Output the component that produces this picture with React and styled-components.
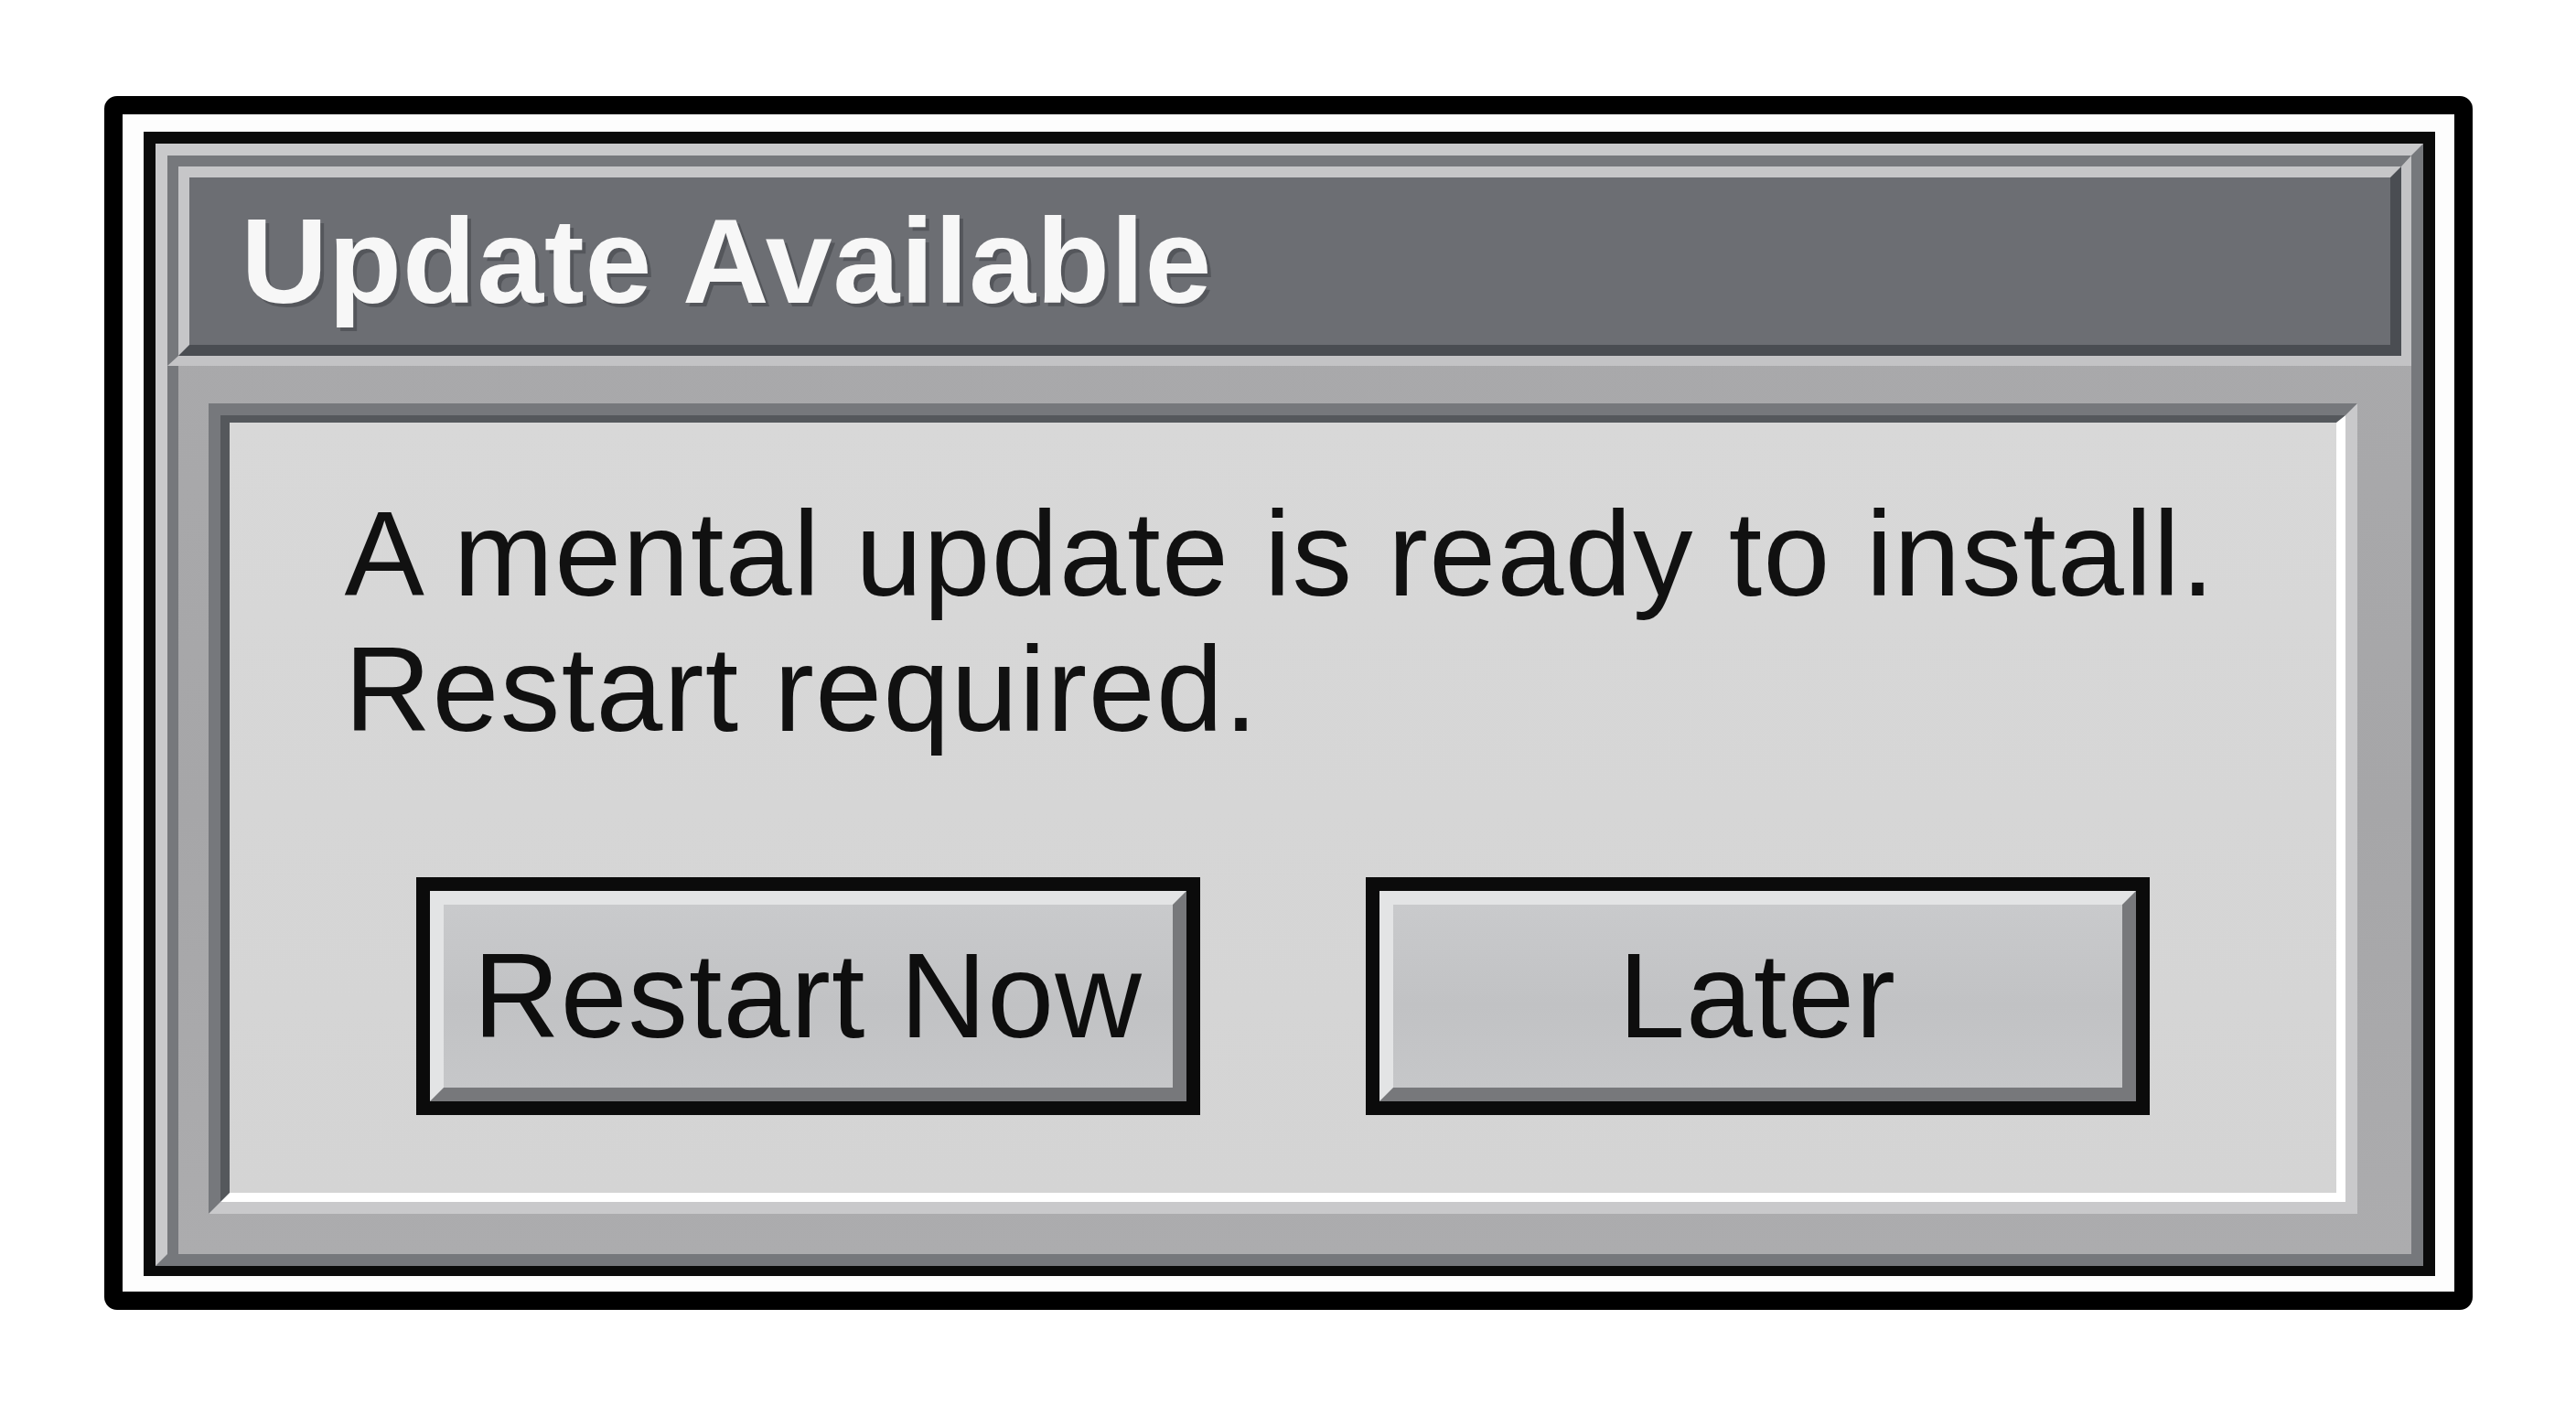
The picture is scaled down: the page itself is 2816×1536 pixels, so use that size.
import styled, { createGlobalStyle } from "styled-components";

const GlobalStyle = createGlobalStyle`
  html, body {
    margin: 0;
    padding: 0;
    background: #ffffff;
  }
  body {
    font-family: "Liberation Sans", Arial, sans-serif;
  }
`;

const App = () => {
  return (
    <Page>
      <GlobalStyle />
      <Frame>
        <InnerEdge>
          <Window>
            <TitleWrap>
              <TitleBar>
                <Title>Update Available</Title>
              </TitleBar>
            </TitleWrap>
            <Body>
              <Panel>
                <PanelInner>
                  <Message>
                    A mental update is ready to install.
                    <br />
                    Restart required.
                  </Message>
                  <ButtonRow>
                    <Button type="button">
                      <Face>Restart Now</Face>
                    </Button>
                    <Button type="button">
                      <Face>Later</Face>
                    </Button>
                  </ButtonRow>
                </PanelInner>
              </Panel>
            </Body>
          </Window>
        </InnerEdge>
      </Frame>
    </Page>
  );
};

export default App;

const Page = styled.div`
  width: 100vw;
  height: 100vh;
  display: flex;
  align-items: center;
  justify-content: center;
  background: #ffffff;
`;

const Frame = styled.div`
  width: 2589px;
  box-sizing: border-box;
  border: 20px solid #000;
  border-radius: 14px;
  background: #fdfdfd;
  padding: 19px 21px 17px 23px;
`;

const InnerEdge = styled.div`
  border: 13px solid #0a0a0a;
  border-bottom-width: 11px;
`;

const Window = styled.div`
  border: 13px solid;
  border-color: #c9c9cb #76787c #76787c #c9c9cb;
  background: linear-gradient(180deg, #aaaaac 0%, #a6a6a8 60%, #acacae 100%);
`;

const TitleWrap = styled.div`
  border-top: 12px solid #76787c;
  border-left: 12px solid #76787c;
  border-right: 11px solid #c3c3c5;
  border-bottom: 11px solid #c3c3c5;
`;

const TitleBar = styled.div`
  height: 183px;
  border: 12px solid;
  border-color: #c6c6c8 #4a4d52 #4a4d52 #c6c6c8;
  background: #6c6e73;
  display: flex;
  align-items: center;
  padding-left: 57px;
`;

const Title = styled.h1`
  margin: 0;
  font-family: "Liberation Sans", Arial, sans-serif;
  font-weight: 700;
  font-size: 131px;
  line-height: 1;
  letter-spacing: 1px;
  color: #f7f7f7;
  text-shadow: 4px 4px 0 rgba(40, 42, 46, 0.35);
  white-space: nowrap;
`;

const Body = styled.div`
  border-left: 12px solid #76787c;
  padding: 41px 59px 44px 33px;
`;

const Panel = styled.div`
  border: 13px solid;
  border-color: #76787c #c9c9cb #c9c9cb #76787c;
`;

const PanelInner = styled.div`
  border: 10px solid;
  border-color: #55585c #ffffff #ffffff #55585c;
  border-top-width: 8px;
  background: linear-gradient(180deg, #d8d8d8 0%, #d4d4d4 100%);
  padding: 70px 0 85px 126px;
  display: flex;
  flex-direction: column;
`;

const Message = styled.p`
  margin: 0 0 131px;
  font-family: "Liberation Sans", Arial, sans-serif;
  font-size: 131px;
  line-height: 148px;
  letter-spacing: 1.4px;
  color: #111111;
  white-space: nowrap;
`;

const ButtonRow = styled.div`
  display: flex;
  justify-content: center;
  gap: 181px;
  margin-left: -126px;
`;

const Button = styled.button`
  width: 857px;
  height: 260px;
  box-sizing: border-box;
  border: 15px solid #0b0b0b;
  padding: 0;
  margin: 0;
  background: #0b0b0b;
  display: flex;
  cursor: pointer;
`;

const Face = styled.span`
  flex: 1;
  border: 15px solid;
  border-color: #e3e4e5 #77787b #77787b #e3e4e5;
  background: linear-gradient(180deg, #c9cacc 0%, #c1c2c4 55%, #c6c7c9 100%);
  display: flex;
  align-items: center;
  justify-content: center;
  font-family: "Liberation Sans", Arial, sans-serif;
  font-size: 131px;
  letter-spacing: 1px;
  line-height: 1;
  color: #0e0e0e;
  white-space: nowrap;
`;
